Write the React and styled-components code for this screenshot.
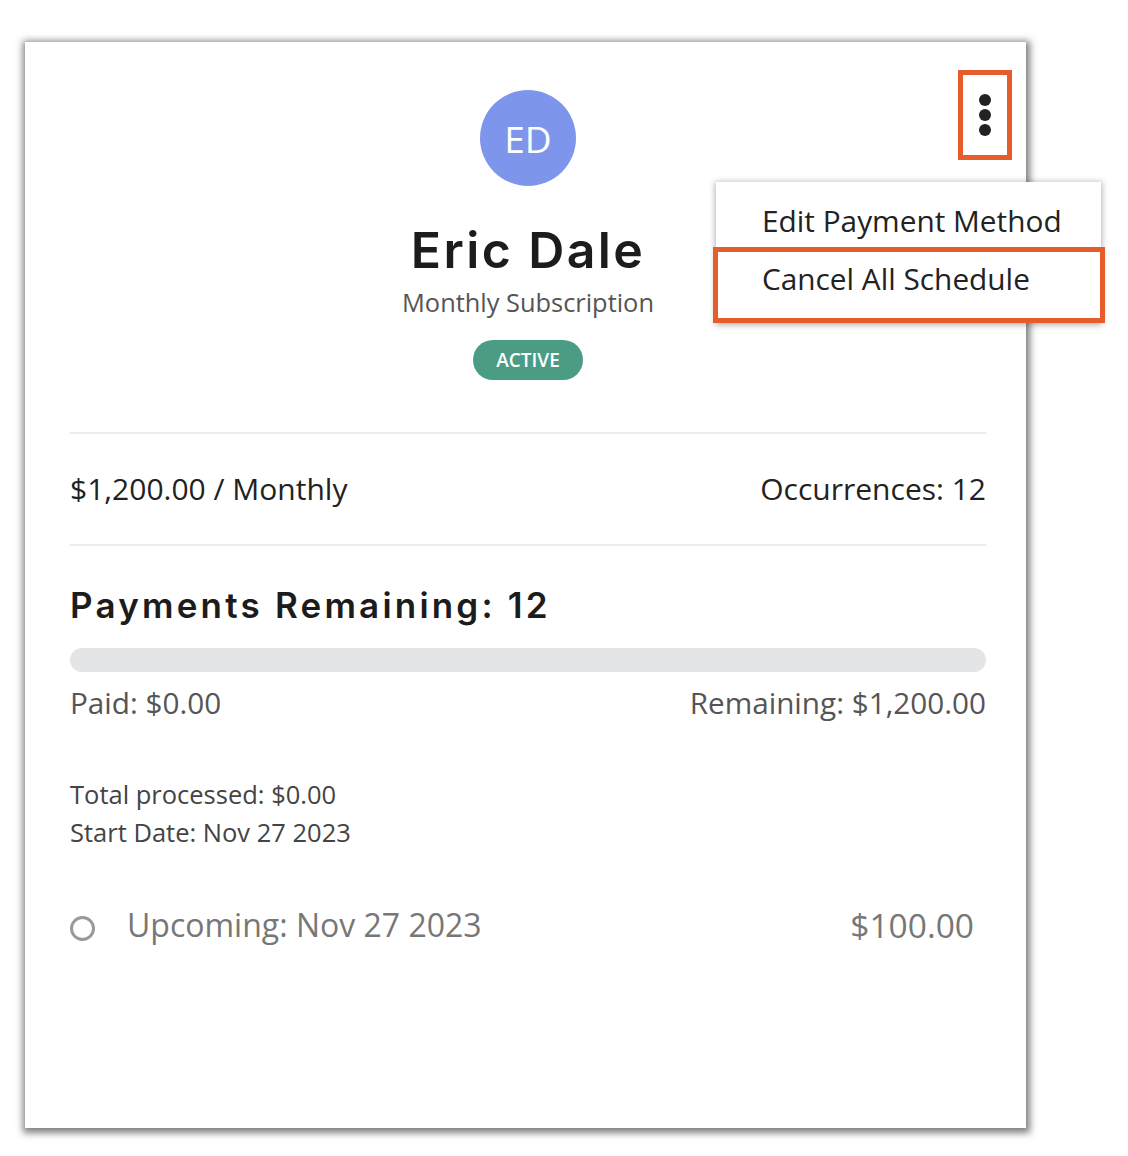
import React from "react";
import styled, { createGlobalStyle } from "styled-components";

const GlobalStyle = createGlobalStyle`
  body {
    margin: 0;
    background: #ffffff;
    font-family: "Open Sans", "Noto Sans", sans-serif;
  }
`

const Page = styled.div`
  padding: 42px 0 0 25px;
  height: 1156px;
  box-sizing: border-box;
`

const Card = styled.div`
  position: relative;
  width: 1001px;
  height: 1086px;
  box-sizing: border-box;
  padding: 48px 40px 0 45px;
  background: #fff;
  box-shadow: 1px 2px 7px 3px rgba(0, 0, 0, 0.5);
`

const Header = styled.div`
  display: flex;
  flex-direction: column;
  align-items: center;
`

const Avatar = styled.div`
  width: 96px;
  height: 96px;
  border-radius: 50%;
  background: #7e95ec;
  color: #fff;
  display: flex;
  align-items: center;
  justify-content: center;
  font-size: 37px;
  font-weight: 500;
`

const Name = styled.h1`
  margin: 34px 0 0;
  font-family: "Inter", "Noto Sans", sans-serif;
  font-size: 50px;
  font-weight: 600;
  letter-spacing: 2.4px;
  line-height: 60px;
  color: #1c1c1c;
`

const Plan = styled.div`
  font-size: 25.4px;
  color: #555;
  line-height: 32px;
  margin-top: 6px;
`

const Badge = styled.span`
  margin-top: 22px;
  padding: 0 23px;
  height: 40px;
  border-radius: 20px;
  background: #4a9d84;
  color: #fff;
  font-size: 19px;
  font-weight: 600;
  display: flex;
  align-items: center;
`

const Divider = styled.hr`
  margin: ${(p) => p.$top}px 0 0;
  border: none;
  border-top: 2px solid #ececec;
`

const Row = styled.div`
  display: flex;
  justify-content: space-between;
  align-items: center;
  margin-top: ${(p) => p.$top || 0}px;
  padding-right: ${(p) => p.$right || 0}px;
  font-size: ${(p) => p.$size}px;
  color: ${(p) => p.$color};
  line-height: 34px;
`

const Heading = styled.h2`
  margin: 37px 0 0;
  font-family: "Inter", "Noto Sans", sans-serif;
  font-size: 35px;
  font-weight: 600;
  letter-spacing: 3.2px;
  color: #1c1c1c;
  line-height: 44px;
`

const Track = styled.div`
  margin-top: 21px;
  height: 24px;
  border-radius: 12px;
  background: #e4e5e7;
`

const Fill = styled.div`
  height: 100%;
  border-radius: 12px;
  background: #4a9d84;
`

const Details = styled.div`
  margin-top: 55px;
  font-size: 25.5px;
  color: #444;
  line-height: 38px;
`

const Upcoming = styled.div`
  display: flex;
  align-items: center;
  gap: 32px;
  font-size: 32px;
`

const Amount = styled.span`
  font-size: 33.5px;
`

const Ring = styled.span`
  width: 19px;
  height: 19px;
  border: 3px solid #999;
  border-radius: 50%;
  margin-top: 6px;
`

const Kebab = styled.button`
  position: absolute;
  top: 28px;
  right: 14px;
  width: 54px;
  height: 90px;
  box-sizing: border-box;
  border: 5px solid #e65d2b;
  background: transparent;
  display: flex;
  flex-direction: column;
  align-items: center;
  justify-content: center;
  gap: 3px;
  padding: 0;
`

const Dot = styled.span`
  width: 12px;
  height: 12px;
  border-radius: 50%;
  background: #222;
`

const Menu = styled.div`
  position: absolute;
  top: 140px;
  left: 691px;
  width: 385px;
  padding: 17px 0 0;
  background: #fff;
  box-shadow: 0 1px 6px 1px rgba(0, 0, 0, 0.3);
`

const MenuItem = styled.div`
  font-size: 29.8px;
  color: #222;
  line-height: 36px;
  padding: 4px 0 4px 46px;
  white-space: nowrap;
  ${(p) => p.$marked && `
    margin: 4px -4px 0 -3px;
    padding: 9px 0 21px 44px;
    border: 5px solid #e65d2b;
  `}
`

const App = () => {
  const paid = 0;
  const total = 1200;

  return (
    <Page>
      <GlobalStyle />
      <Card>
        <Header>
          <Avatar>ED</Avatar>
          <Name>Eric Dale</Name>
          <Plan>Monthly Subscription</Plan>
          <Badge>ACTIVE</Badge>
        </Header>

        <Divider $top={52} />
        <Row $top={38} $size={30} $color="#222">
          <span>$1,200.00 / Monthly</span>
          <span>Occurrences: 12</span>
        </Row>
        <Divider $top={38} />

        <Heading>Payments Remaining: 12</Heading>
        <Track>
          <Fill style={{ width: `${(paid / total) * 100}%` }} />
        </Track>
        <Row $top={14} $size={29.7} $color="#555">
          <span>Paid: $0.00</span>
          <span>Remaining: $1,200.00</span>
        </Row>

        <Details>
          <div>Total processed: $0.00</div>
          <div>Start Date: Nov 27 2023</div>
        </Details>

        <Row $top={57} $size={32} $color="#777" $right={12}>
          <Upcoming>
            <Ring />
            <span>Upcoming: Nov 27 2023</span>
          </Upcoming>
          <Amount>$100.00</Amount>
        </Row>

        <Kebab>
          <Dot />
          <Dot />
          <Dot />
        </Kebab>

        <Menu>
          <MenuItem>Edit Payment Method</MenuItem>
          <MenuItem $marked>Cancel All Schedule</MenuItem>
        </Menu>
      </Card>
    </Page>
  );
};

export default App;
